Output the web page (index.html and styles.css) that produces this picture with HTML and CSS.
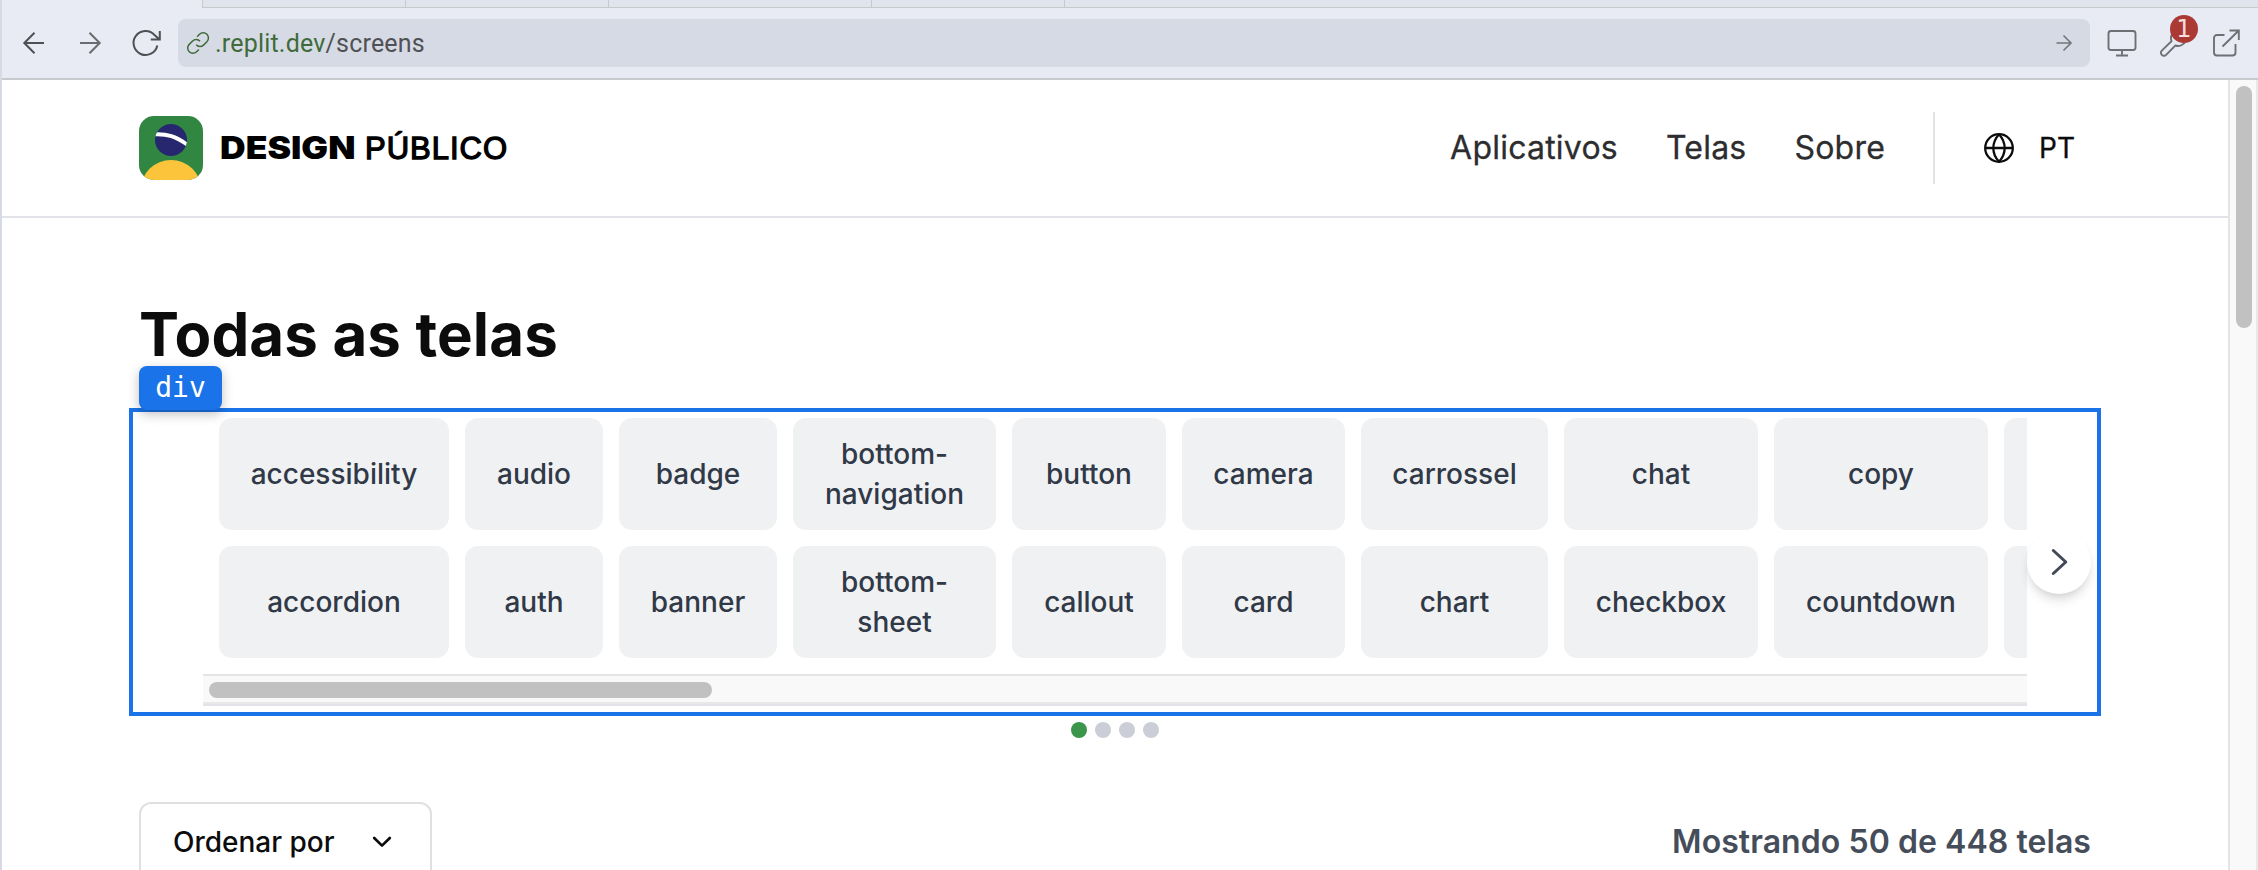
FILE: index.html
```html
<!DOCTYPE html>
<html lang="pt">
<head>
<meta charset="utf-8">
<title>Design Público</title>
<link rel="stylesheet" href="styles.css">
</head>
<body>
<div class="window">
  <div class="toolbar">
    <div class="tabs"><i class="tab t1"></i><i class="tab t1"></i><i class="tab t2"></i><i class="tab t3"></i><i class="tab rest"></i></div>
    <div class="tools">
      <svg class="ico back" viewBox="0 0 28 28"><path d="M24 14H4.500M14.500 3.800L4.300 14l10.200 10.200"/></svg>
      <svg class="ico fwd" viewBox="0 0 28 28"><path d="M4 14h19.500M13.500 3.800L23.700 14 13.500 24.200"/></svg>
      <svg class="ico reload" viewBox="0 0 32 32"><path d="M26.300 18.500A12 12 0 1 1 23.500 8l5 4.500M28.800 4v8.500h-9"/></svg>
      <div class="url">
        <svg class="ico link" viewBox="0 0 24 24"><path d="M10.200 13.800a5 5 0 0 0 7.300.3l3.400-3.400a5.200 5.200 0 0 0-7.400-7.400l-2.400 2.400M14 10.300a5 5 0 0 0-7.400-.3l-3.400 3.400a5.200 5.200 0 0 0 7.400 7.400l2.300-2.400"/></svg>
        <span class="host">.replit.dev</span><span class="path">/screens</span>
        <svg class="ico go" viewBox="0 0 20 20"><path d="M2.500 10h14.500M9.500 2.500L17 10l-7.500 7.500"/></svg>
      </div>
      <svg class="ico act monitor" viewBox="0 0 32 32"><rect x="2.500" y="4" width="27" height="19" rx="2.500"/><path d="M16 23v5M10 28.500h12"/></svg>
      <div class="wrench">
        <svg class="ico act" viewBox="0 0 32 32"><path d="M27.500 8.500l-4.500 4.300-3.500-1-1-3.500 4.500-4.500a8 8 0 0 0-9.500 10.500L3.800 23.600a3 3 0 0 0 4.300 4.300L17.300 18.500a8 8 0 0 0 10.500-9.500z"/></svg>
        <b class="badge">1</b>
      </div>
      <svg class="ico act ext" viewBox="0 0 32 32"><path d="M14.500 8H7a3 3 0 0 0-3 3v14.500a3 3 0 0 0 3 3h15.500a3 3 0 0 0 3-3V17M12.500 19.500L28.500 3.700M19.500 3.500h9.300V13"/></svg>
    </div>
  </div>
  <div class="view">
    <div class="page">
      <header class="header">
        <svg class="logo" viewBox="0 0 64 64"><defs><clipPath id="r"><rect width="64" height="64" rx="15"/></clipPath><clipPath id="c"><circle cx="32" cy="24" r="16"/></clipPath></defs><g clip-path="url(#r)"><rect width="64" height="64" fill="#318742"/><circle cx="32" cy="24" r="16" fill="#272770"/><path clip-path="url(#c)" d="M14 18.400C28 17.500 37 20 50 30" fill="none" stroke="#fff" stroke-width="3.800"/><ellipse cx="32" cy="73" rx="30" ry="29" fill="#fbc43b"/></g></svg>
        <span class="brand"><span class="b1">DESIGN</span><span class="b2">PÚBLICO</span></span>
        <nav class="nav"><a>Aplicativos</a><a>Telas</a><a>Sobre</a></nav>
        <div class="lang">
          <svg class="globe" viewBox="0 0 30 30"><circle cx="15" cy="15" r="13.800"/><path d="M1.200 15h27.600M15 1.200c-7.600 8.500-7.600 19.100 0 27.600 7.600-8.500 7.600-19.100 0-27.600"/></svg>
          <span>PT</span>
        </div>
      </header>
      <main class="main">
        <h1 class="title">Todas as telas</h1>
        <section class="carousel">
          <span class="tag">div</span>
          <div class="viewport">
            <div class="grid">
              <a class="chip">accessibility</a><a class="chip">audio</a><a class="chip">badge</a><a class="chip">bottom-navigation</a><a class="chip">button</a><a class="chip">camera</a><a class="chip">carrossel</a><a class="chip">chat</a><a class="chip">copy</a><a class="chip"></a>
              <a class="chip">accordion</a><a class="chip">auth</a><a class="chip">banner</a><a class="chip">bottom-sheet</a><a class="chip">callout</a><a class="chip">card</a><a class="chip">chart</a><a class="chip">checkbox</a><a class="chip">countdown</a><a class="chip"></a>
            </div>
            <div class="hbar"><div class="hthumb"></div></div>
          </div>
          <button class="next"><svg viewBox="0 0 24 32"><path d="M6.300 4.500L18.800 16 6.300 27.500"/></svg></button>
        </section>
        <div class="dots"><i class="on"></i><i></i><i></i><i></i></div>
        <div class="controls">
          <button class="select"><span>Ordenar por</span><svg viewBox="0 0 24 16"><path d="M4.200 4L12 11.600 19.800 4"/></svg></button>
          <p class="count">Mostrando 50 de 448 telas</p>
        </div>
      </main>
    </div>
    <div class="vbar"><div class="vthumb"></div></div>
  </div>
</div>
</body>
</html>
```
FILE: styles.css
```css
* { box-sizing: border-box; }
body { margin: 0; background: #fff; font-family: Inter, "Liberation Sans", sans-serif; overflow: hidden; }
.window { width: 2258px; height: 870px; display: flex; flex-direction: column; border-left: 2px solid #d6dae5; overflow: hidden; }

.toolbar { height: 80px; flex: none; background: #e8ebf4; border-bottom: 2px solid #c8c9cc; }
.tabs { display: flex; height: 8px; padding-left: 200px; }
.tab { height: 8px; background: #e0e4ec; border-left: 1px solid #c8c9cc; border-bottom: 1px solid #c8c9cc; }
.t1 { width: 203px; }
.t2 { width: 263px; }
.t3 { width: 193px; }
.rest { flex: 1; }
.tools { display: flex; align-items: center; height: 70px; }
.ico { fill: none; stroke: #4f5053; stroke-width: 2; flex: none; }
.back { width: 28px; margin-left: 18px; }
.fwd { width: 28px; margin-left: 28px; stroke: #6b6c70; }
.reload { width: 32px; margin-left: 27px; }
.url { display: flex; align-items: center; width: 1912px; height: 48px; margin-left: 15px; padding: 0 16px 0 8px; border-radius: 8px; background: #d6dae5; font: 25px/48px Roboto, "Noto Sans", sans-serif; letter-spacing: .2px; }
.link { width: 24px; stroke: #3f6b3a; stroke-width: 1.500; margin-right: 5px; }
.host, .path { padding-top: 2px; }
.host { color: #3f6b3a; }
.path { color: #505154; }
.go { width: 20px; margin-left: auto; stroke: #747679; stroke-width: 1.600; }
.act { width: 32px; height: 32px; stroke: #6e7074; stroke-width: 1.900; display: block; }
.monitor { margin-left: 16px; }
.wrench { position: relative; margin-left: 20px; }
.ext { margin-left: 20px; }
.badge { position: absolute; left: 12px; top: -12px; width: 28px; height: 28px; border-radius: 50%; background: #ab3a35; color: #f8dedd; font: 24px/28px "DejaVu Sans", sans-serif; text-align: center; }

.view { display: flex; flex: 1; min-height: 0; }
.page { flex: 1; min-width: 0; overflow: hidden; }
.vbar { width: 30px; background: #f9f9f9; border-left: 2px solid #e4e4e6; border-right: 2px solid #e8e8e8; padding: 6px 4px 0 6px; }
.vthumb { height: 242px; border-radius: 8px; background: #c1c1c1; }

.header { display: flex; align-items: center; height: 138px; padding: 0 153px 0 137px; border-bottom: 2px solid #e2e3e9; }
.logo { width: 64px; height: 64px; }
.brand { display: flex; align-items: baseline; margin-left: 17px; color: #000; line-height: 40px; padding-top: 1px; }
.b1 { width: 145px; font-weight: 900; font-size: 31px; white-space: nowrap; transform: scaleX(1.145); transform-origin: 0 50%; }
.b2 { font: 31px/40px "Liberation Sans", Arial, sans-serif; letter-spacing: 1px; -webkit-text-stroke: 1.300px #000; white-space: nowrap; }
.nav { display: flex; margin-left: auto; padding-bottom: 1px; font-size: 32px; letter-spacing: .22px; -webkit-text-stroke: .3px #2d2d2f; color: #2d2d2f; gap: 48px; padding-right: 48px; }
.lang { display: flex; align-items: center; height: 72px; border-left: 2px solid #e2e3e6; padding-left: 49px; gap: 25px; font-size: 28px; color: #0c0c0d; -webkit-text-stroke: .3px #0c0c0d; }
.globe { width: 30px; fill: none; stroke: #0c0c0d; stroke-width: 2.300; }

.main { padding: 80px 137px 0; }
.title { margin: 0; height: 110px; font-size: 60px; line-height: 72px; font-weight: 700; letter-spacing: .13px; color: #0c0c0d; }
.carousel { position: relative; display: flex; margin: 0 -10px; width: 1972px; height: 308px; border: 4px solid #1a73e8; padding: 6px 6px 6px 70px; }
.tag { position: absolute; left: 6px; top: -46px; width: 83px; height: 44px; border-radius: 8px; background: #1a73e8; color: #fff; font: 28px/44px "DejaVu Sans Mono", monospace; text-align: center; box-shadow: 0 4px 12px rgba(0,0,0,.25); }
.viewport { width: 1824px; overflow: hidden; }
.grid { display: grid; grid-template-columns: 230px 138px 158px 203px 154px 163px 187px 194px 214px 160px; grid-auto-rows: 112px; gap: 16px; width: max-content; padding: 0 16px; }
.chip { display: flex; align-items: center; justify-content: center; padding: 0 30px; border-radius: 13px; background: #f0f1f3; color: #303947; font-size: 28px; line-height: 40px; font-weight: 500; text-align: center; }
.hbar { height: 32px; margin-top: 16px; background: #f9f9f9; border-top: 2px solid #e4e4e6; border-bottom: 2px solid #e2e3e9; padding: 6px; box-shadow: inset 0 -2px #e8e8e8; }
.hthumb { width: 503px; height: 16px; border-radius: 8px; background: #c1c1c1; }
.next { width: 64px; height: 64px; margin-top: 112px; padding: 0; border: 0; border-radius: 50%; background: #fff; display: grid; place-items: center; box-shadow: 0 8px 12px -2px rgba(0,0,0,.12), 0 4px 8px -4px rgba(0,0,0,.12); }
.next svg { width: 24px; height: 32px; fill: none; stroke: #414956; stroke-width: 3; stroke-linecap: round; stroke-linejoin: round; }
.dots { display: flex; justify-content: center; gap: 8px; margin-top: 6px; }
.dots i { width: 16px; height: 16px; border-radius: 50%; background: #cbced6; }
.dots .on { background: #3b954a; }
.controls { display: flex; justify-content: space-between; margin-top: 64px; }
.select { display: flex; align-items: center; justify-content: space-between; width: 293px; height: 80px; border: 2px solid #e0e0e1; border-radius: 12px; background: #fff; padding: 0 36px 0 32px; color: #0c0c0d; font: 500 28px/40px Inter, sans-serif; }
.select svg { width: 24px; fill: none; stroke: #0c0c0d; stroke-width: 2.700; stroke-linecap: round; stroke-linejoin: round; }
.count { margin: 18px 0 0; font-size: 32px; line-height: 44px; font-weight: 600; letter-spacing: .06px; color: #454d5a; }
```
